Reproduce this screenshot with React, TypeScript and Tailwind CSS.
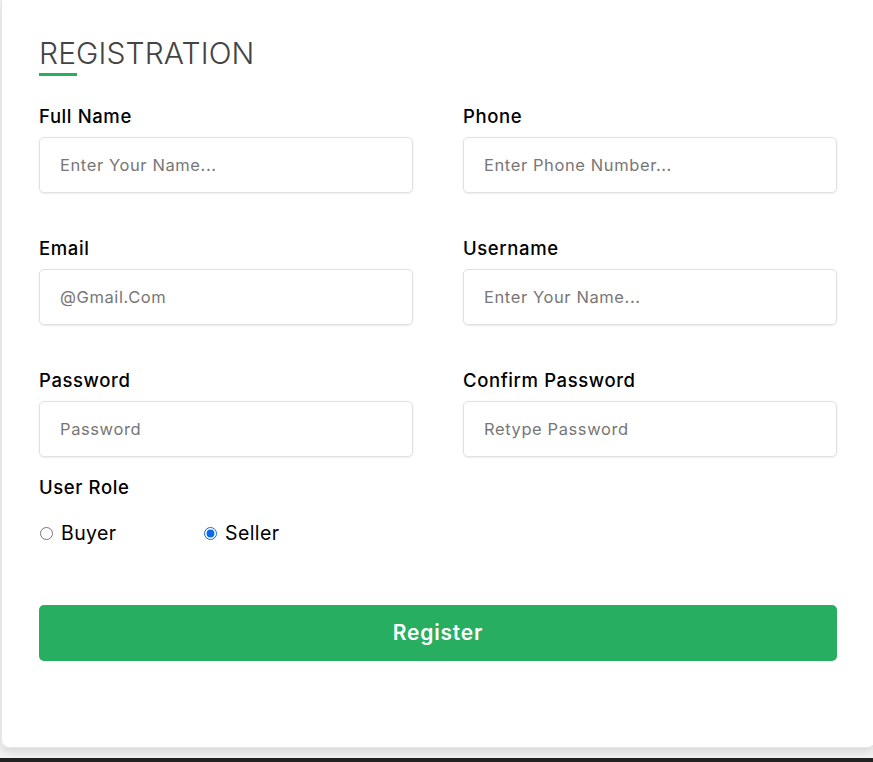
import { useState } from "react"

const fields = [
    { label: "Full Name", placeholder: "Enter Your Name...", type: "text" },
    { label: "Phone", placeholder: "Enter Phone Number...", type: "text" },
    { label: "Email", placeholder: "@Gmail.Com", type: "email" },
    { label: "Username", placeholder: "Enter Your Name...", type: "text" },
    { label: "Password", placeholder: "Password", type: "password" },
    { label: "Confirm Password", placeholder: "Retype Password", type: "password" },
]

export default function App() {
    const [role, setRole] = useState("seller")

    return (
        <div className="w-full h-[762px] overflow-hidden bg-white flex flex-col font-['Inter',sans-serif]">
            <div className="h-[758px] bg-[#f4f4f4]">
                <div className="ml-px w-[874px] h-[748px] bg-white border border-[#e6e6e6] border-r-0 border-t-0 rounded-b-lg shadow-[0_4px_10px_rgba(0,0,0,0.12)] px-[37px] pt-[34px]">
                    <h1 className="text-[30px] leading-[38px] font-light text-[#444] tracking-[0.1px]">REGISTRATION</h1>
                    <div className="mt-px w-[38px] h-[3px] bg-[#27ae60]"></div>

                    <div className="mt-[27px] grid grid-cols-[374px_374px] gap-x-[50px] gap-y-[42px]">
                        {fields.map((f) => (
                            <div key={f.label} className="flex flex-col">
                                <label className="text-[18.5px] leading-[27px] font-medium text-black tracking-[0.6px]">{f.label}</label>
                                <input
                                    type={f.type}
                                    placeholder={f.placeholder}
                                    className="mt-[7px] h-[56px] w-full rounded-[5px] border border-[#e0e0e0] shadow-[0_1px_2px_rgba(0,0,0,0.08)] px-5 text-[16.5px] tracking-[0.6px] text-[#333] placeholder:text-[#777] outline-none"
                                />
                            </div>
                        ))}
                    </div>

                    <p className="mt-[17px] text-[18.5px] leading-[27px] font-medium text-black tracking-[0.6px]">User Role</p>
                    <div className="mt-[18px] flex items-center text-[19.5px] leading-[28px] text-black tracking-[0.4px]">
                        <label className="flex items-center w-[163px]">
                            <input type="radio" name="role" checked={role === "buyer"} onChange={() => setRole("buyer")} className="w-[13px] h-[13px] ml-[1px] mr-[8px]" />
                            Buyer
                        </label>
                        <label className="flex items-center">
                            <input type="radio" name="role" checked={role === "seller"} onChange={() => setRole("seller")} className="w-[13px] h-[13px] ml-[2px] mr-[8px] accent-[#0b68e8]" />
                            Seller
                        </label>
                    </div>

                    <button type="button" className="mt-[58px] w-[798px] h-[56px] rounded-[5px] bg-[#27ae60] text-white text-[21px] font-semibold tracking-[0.8px]">
                        Register
                    </button>
                </div>
            </div>
            <div className="flex-1 bg-[#222]"></div>
        </div>
    )
}
